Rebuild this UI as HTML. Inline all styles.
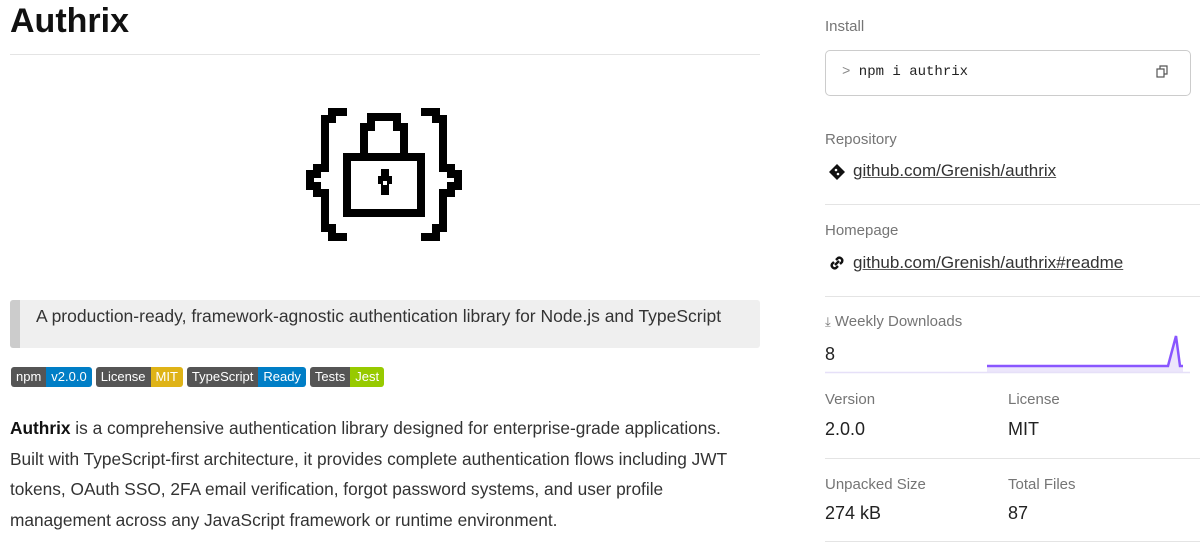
<!DOCTYPE html>
<html><head><meta charset="utf-8"><style>
*{margin:0;padding:0;box-sizing:border-box}
body{width:1200px;height:543px;overflow:hidden;background:#fff;font-family:"Liberation Sans",sans-serif;color:#222;position:relative}
.a{position:absolute;white-space:nowrap}
.lbl{color:#757575;font-size:15px}
.lnk{color:#333;font-size:17px;text-decoration:underline;text-decoration-color:#555}
.hr{position:absolute;height:1px;background:#e4e4e4}
.val{color:#222;font-size:18px}
.b{display:inline-flex;height:20px;font-size:13px;color:#fff;border-radius:3px;overflow:hidden;margin-right:4px;line-height:20px}
.b span{padding:0 5px}
.d{background:#555}
</style></head><body>
<div class="a" style="left:10px;top:2px;font-size:34px;font-weight:bold;color:#111">Authrix</div>
<div class="hr" style="left:10px;top:54px;width:750px"></div>
<svg class="a" style="left:300px;top:105px" width="170" height="145" viewBox="300 105 170 145" fill="none" stroke="#000" stroke-width="8" stroke-linejoin="miter">
<path d="M347 112H332V119H325V168H317V174H310V186H317V193H325V228H332V237H347"/>
<path d="M421 112H436V119H443V168H451V174H458V186H451V193H443V228H436V237H421"/>
<path d="M364 154V127H371V117H397V127H404V154"/>
<rect x="347" y="157" width="74" height="56"/>
<path d="M385 169V195M378 180H392"/>
<rect x="383" y="181" width="4" height="4" fill="#fff" stroke="none"/>
</svg>
<div class="a" style="left:10px;top:300px;width:750px;height:48px;background:#efefef;border-left:10px solid #ccc;border-radius:3px"></div>
<div class="a" style="left:36px;top:306px;font-size:17.5px;color:#333">A production-ready, framework-agnostic authentication library for Node.js and TypeScript</div>
<div class="a" style="left:11px;top:367px;display:flex">
<div class="b"><span class="d">npm</span><span style="background:#007ec6">v2.0.0</span></div>
<div class="b"><span class="d">License</span><span style="background:#dfb317">MIT</span></div>
<div class="b"><span class="d">TypeScript</span><span style="background:#007ec6">Ready</span></div>
<div class="b"><span class="d">Tests</span><span style="background:#97ca00">Jest</span></div>
</div>
<div class="a" style="left:10px;top:413px;font-size:17.3px;line-height:30.7px;color:#333;white-space:normal;width:745px"><b style="color:#111">Authrix</b> is a comprehensive authentication library designed for enterprise-grade applications. Built with TypeScript-first architecture, it provides complete authentication flows including JWT tokens, OAuth SSO, 2FA email verification, forgot password systems, and user profile management across any JavaScript framework or runtime environment.</div>

<div class="a lbl" style="left:825px;top:18px">Install</div>
<div class="a" style="left:825px;top:50px;width:366px;height:46px;border:1px solid #ccc;border-radius:5px"></div>
<div class="a" style="left:842px;top:64px;font-family:'Liberation Mono',monospace;font-size:14px;color:#222"><span style="color:#888">&gt;</span> npm i authrix</div>
<svg class="a" style="left:1156px;top:65px" width="12" height="13" viewBox="0 0 12 13" fill="none" stroke="#555" stroke-width="1.2"><rect x="1" y="4" width="7" height="8"/><path d="M4 4V1H11V9H8"/></svg>
<div class="a lbl" style="left:825px;top:131px">Repository</div>
<svg class="a" style="left:828px;top:163px" width="18" height="18" viewBox="0 0 18 18"><path d="M9 1L17 9L9 17L1 9Z" fill="#111"/><circle cx="8" cy="7" r="1.3" fill="#fff"/><circle cx="10" cy="11" r="1.3" fill="#fff"/></svg>
<div class="a lnk" style="left:853px;top:161px">github.com/Grenish/authrix</div>
<div class="hr" style="left:825px;top:204px;width:375px"></div>
<div class="a lbl" style="left:825px;top:222px">Homepage</div>
<svg class="a" style="left:828px;top:254px" width="18" height="18" viewBox="0 0 18 18" fill="none" stroke="#111" stroke-width="2.4"><path d="M8 6L10 4A3 3 0 0 1 14 8L12 10M10 12L8 14A3 3 0 0 1 4 10L6 8M7 11L11 7"/></svg>
<div class="a lnk" style="left:853px;top:253px">github.com/Grenish/authrix#readme</div>
<div class="hr" style="left:825px;top:296px;width:375px"></div>
<div class="a lbl" style="left:825px;top:313px"><span style="font-size:13px">⤓</span> Weekly Downloads</div>
<div class="a val" style="left:825px;top:344px">8</div>
<svg class="a" style="left:825px;top:330px" width="365" height="46" viewBox="0 0 365 46"><path d="M162 36H343L351 6L355 36H358V42H162Z" fill="#ece6fb"/><path d="M162 36H343L351 6L355 36H358" fill="none" stroke="#8956ff" stroke-width="2.5"/><path d="M0 42.5H365" stroke="#e6e0f8" stroke-width="1.5"/></svg>
<div class="a lbl" style="left:825px;top:391px">Version</div>
<div class="a val" style="left:825px;top:419px">2.0.0</div>
<div class="a lbl" style="left:1008px;top:391px">License</div>
<div class="a val" style="left:1008px;top:419px">MIT</div>
<div class="hr" style="left:825px;top:458px;width:375px"></div>
<div class="a lbl" style="left:825px;top:476px">Unpacked Size</div>
<div class="a val" style="left:825px;top:503px">274 kB</div>
<div class="a lbl" style="left:1008px;top:476px">Total Files</div>
<div class="a val" style="left:1008px;top:503px">87</div>
<div class="hr" style="left:825px;top:541px;width:375px"></div>
</body></html>
